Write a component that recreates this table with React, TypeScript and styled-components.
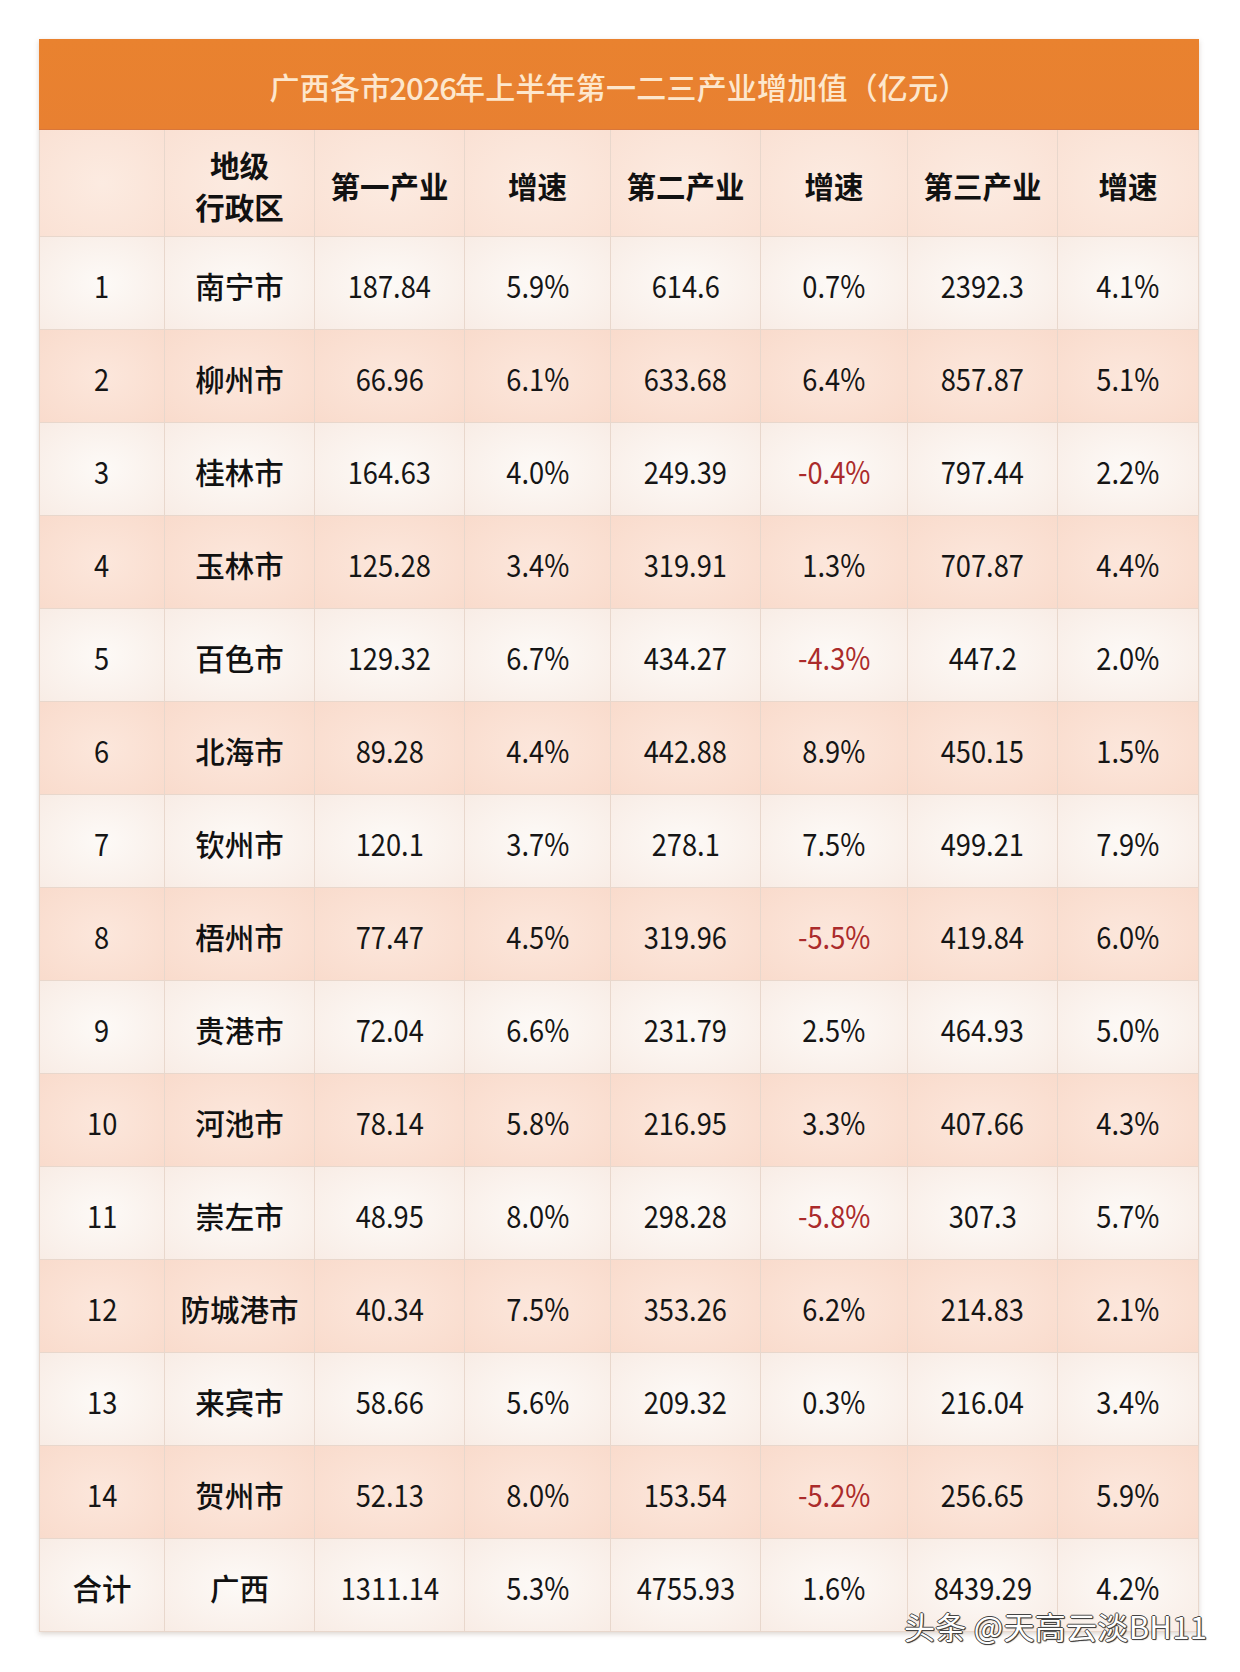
import React from "react";
import styled, { createGlobalStyle, css } from "styled-components";

const GlobalStyle = createGlobalStyle`
  html, body {
    margin: 0;
    padding: 0;
    background: #ffffff;
  }
  body {
    font-family: "Noto Sans CJK SC", sans-serif;
  }
`;

const Page = styled.div`
  position: relative;
  width: 1240px;
  height: 1672px;
  padding: 39px 0 0 39px;
  box-sizing: border-box;
`;

const Table = styled.div`
  width: 1160px;
  box-shadow: 0 2px 5px rgba(120, 90, 70, 0.25);
`;

const TitleBar = styled.div`
  height: 91px;
  display: flex;
  align-items: center;
  justify-content: center;
  background: linear-gradient(180deg, #e9822f 0%, #e88031 100%);
  border-bottom: 1px solid #d9763a;
  box-sizing: border-box;
  color: #fde7cd;
  font-family: "Noto Sans CJK SC", sans-serif;
  font-size: 30px;
  font-weight: 500;
  letter-spacing: 0.2px;
  padding-top: 4px;
`;

const TitleDigits = styled.span`
  display: inline-block;
  font-size: 31px;
  letter-spacing: -1px;
  margin: 0 -1px;
`;

const Row = styled.div<{ $kind: "head" | "light" | "peach" }>`
  display: grid;
  grid-template-columns: 126px 150px 150px 146px 150px 147px 150px 141px;
  height: ${(p) => (p.$kind === "head" ? 107 : 93)}px;
`;

const cellBg = {
  head: css`
    background: radial-gradient(ellipse at 50% 50%, #fcebe1 0%, #fae1d4 100%);
  `,
  peach: css`
    background: radial-gradient(ellipse at 50% 50%, #fce7dc 0%, #f9dbcc 100%);
  `,
  light: css`
    background: radial-gradient(ellipse at 50% 50%, #fdfaf7 0%, #f8ece5 100%);
  `,
};

const Cell = styled.div<{ $kind: "head" | "light" | "peach"; $red?: boolean }>`
  display: flex;
  align-items: center;
  justify-content: center;
  text-align: center;
  box-sizing: border-box;
  border-right: 1px solid #e8d7cc;
  border-bottom: 1px solid #e8d7cc;
  ${(p) => cellBg[p.$kind]}
  color: ${(p) => (p.$red ? "#ab2b2b" : "#151515")};
  padding-top: 3px;
  &:first-child {
    border-left: 1px solid #e8d7cc;
  }
`;

const Num = styled.span`
  display: inline-block;
  font-family: "Noto Sans CJK SC", sans-serif;
  font-size: 31px;
  font-weight: 400;
  transform: scaleX(0.88);
`;

const HeadText = styled.span`
  font-family: "Noto Sans CJK SC", sans-serif;
  font-weight: 700;
  font-size: 29.5px;
  line-height: 42px;
  color: #111;
`;

const CityText = styled.span`
  font-family: "Noto Sans CJK SC", sans-serif;
  font-weight: 500;
  font-size: 29.5px;
  color: #111;
`;

const Watermark = styled.div`
  position: absolute;
  left: 904px;
  top: 1603px;
  font-family: "Noto Sans CJK SC", sans-serif;
  font-size: 31px;
  font-weight: 400;
  color: #ffffff;
  letter-spacing: 0.3px;
  text-shadow:
    -1px 0 0 #444,
    1px 0 0 #444,
    0 -1px 0 #444,
    0 1px 0 #444,
    1px 1px 1px #222;
`;

type Rec = [string, string, string, string, string, string, string, string];

const rows: Rec[] = [
  ["1", "南宁市", "187.84", "5.9%", "614.6", "0.7%", "2392.3", "4.1%"],
  ["2", "柳州市", "66.96", "6.1%", "633.68", "6.4%", "857.87", "5.1%"],
  ["3", "桂林市", "164.63", "4.0%", "249.39", "-0.4%", "797.44", "2.2%"],
  ["4", "玉林市", "125.28", "3.4%", "319.91", "1.3%", "707.87", "4.4%"],
  ["5", "百色市", "129.32", "6.7%", "434.27", "-4.3%", "447.2", "2.0%"],
  ["6", "北海市", "89.28", "4.4%", "442.88", "8.9%", "450.15", "1.5%"],
  ["7", "钦州市", "120.1", "3.7%", "278.1", "7.5%", "499.21", "7.9%"],
  ["8", "梧州市", "77.47", "4.5%", "319.96", "-5.5%", "419.84", "6.0%"],
  ["9", "贵港市", "72.04", "6.6%", "231.79", "2.5%", "464.93", "5.0%"],
  ["10", "河池市", "78.14", "5.8%", "216.95", "3.3%", "407.66", "4.3%"],
  ["11", "崇左市", "48.95", "8.0%", "298.28", "-5.8%", "307.3", "5.7%"],
  ["12", "防城港市", "40.34", "7.5%", "353.26", "6.2%", "214.83", "2.1%"],
  ["13", "来宾市", "58.66", "5.6%", "209.32", "0.3%", "216.04", "3.4%"],
  ["14", "贺州市", "52.13", "8.0%", "153.54", "-5.2%", "256.65", "5.9%"],
  ["合计", "广西", "1311.14", "5.3%", "4755.93", "1.6%", "8439.29", "4.2%"],
];

const headers = ["", "地级\n行政区", "第一产业", "增速", "第二产业", "增速", "第三产业", "增速"];

const isCjk = (s: string) => /[\u4e00-\u9fff]/.test(s);

export default function App() {
  return (
    <Page>
      <GlobalStyle />
      <Table>
        <TitleBar>
          广西各市<TitleDigits>2026</TitleDigits>年上半年第一二三产业增加值（亿元）
        </TitleBar>
        <Row $kind="head">
          {headers.map((h, i) => (
            <Cell key={i} $kind="head">
              <HeadText>
                {h.split("\n").map((line, j) => (
                  <React.Fragment key={j}>
                    {j > 0 && <br />}
                    {line}
                  </React.Fragment>
                ))}
              </HeadText>
            </Cell>
          ))}
        </Row>
        {rows.map((r, ri) => {
          const kind = ri % 2 === 0 ? "light" : "peach";
          return (
            <Row key={ri} $kind={kind}>
              {r.map((v, ci) => (
                <Cell key={ci} $kind={kind} $red={v.startsWith("-")}>
                  {isCjk(v) ? <CityText>{v}</CityText> : <Num>{v}</Num>}
                </Cell>
              ))}
            </Row>
          );
        })}
      </Table>
      <Watermark>头条 @天高云淡BH11</Watermark>
    </Page>
  );
}
